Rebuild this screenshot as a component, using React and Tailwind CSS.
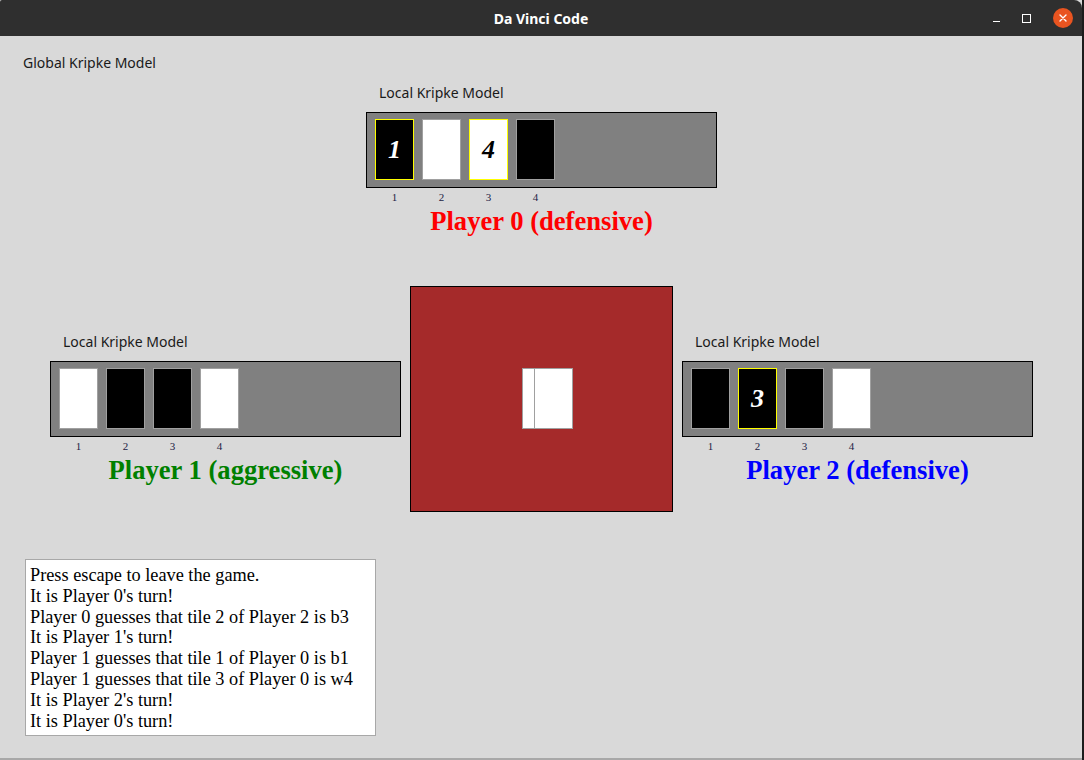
import React from "react";

const SANS = "font-['Noto_Sans',sans-serif]";
const SERIF = "font-['Liberation_Serif',serif]";

function Tile({ color, label, selected }) {
    const bg = color === "b" ? "bg-black text-white" : "bg-white text-black";
    const border = selected ? "border-[#ffff00]" : "border-[#a0a0a0]";
    return (
        <div className={`w-[39px] h-[61px] border ${border} ${bg} flex items-center justify-center ${SERIF} italic font-bold text-[26px] leading-none`}>
            {label}
        </div>
    );
}

function PlayerBoard({ tiles, name, nameColor }) {
    return (
        <div className="w-[351px] flex flex-col">
            <div className={`${SANS} text-[14px] leading-[18px] text-[#1a1a1a] pl-[13px]`}>Local Kripke Model</div>
            <div className="mt-[10px] h-[76px] border border-black bg-[#808080] flex gap-[8px] pl-[8px] pt-[6px]">
                {tiles.map((t, i) => (
                    <Tile key={i} {...t} />
                ))}
            </div>
            <div className="flex gap-[8px] pl-[9px] mt-[3px]">
                {tiles.map((_, i) => (
                    <div key={i} className={`w-[39px] text-center ${SERIF} text-[11px] leading-[12px] text-[#1c1c44]`}>{i + 1}</div>
                ))}
            </div>
            <div className={`${SERIF} font-bold text-[26.6px] leading-[30px] text-center mt-[3px] ${nameColor}`}>{name}</div>
        </div>
    );
}

const LOG = [
    "Press escape to leave the game.",
    "It is Player 0's turn!",
    "Player 0 guesses that tile 2 of Player 2 is b3",
    "It is Player 1's turn!",
    "Player 1 guesses that tile 1 of Player 0 is b1",
    "Player 1 guesses that tile 3 of Player 0 is w4",
    "It is Player 2's turn!",
    "It is Player 0's turn!",
];

export default function App() {
    return (
        <div className="w-[1084px] h-[760px] flex bg-[#1c1c1c] overflow-hidden">
            <div className="w-[1082px] h-full flex flex-col bg-[#d9d9d9] border-b-2 border-[#a8a8a8]">
                {/* title bar */}
                <div className="h-[36px] bg-[#2f2f2f] rounded-tr-[8px] rounded-tl-[2px] relative flex items-center justify-center">
                    <span className={`${SANS} font-bold text-[14px] text-white`}>Da Vinci Code</span>
                    <div className="absolute right-[9px] top-[8px] flex items-center gap-[22px]">
                        <div className="w-[7px] h-[1px] bg-white mt-[6px]" />
                        <div className="w-[9px] h-[9px] border border-white" />
                        <div className="w-[20px] h-[20px] rounded-full bg-[#e95420] flex items-center justify-center">
                            <svg width="10" height="10" viewBox="0 0 10 10">
                                <path d="M2 2 L8 8 M8 2 L2 8" stroke="white" strokeWidth="1.4" strokeLinecap="round" />
                            </svg>
                        </div>
                    </div>
                </div>

                {/* content */}
                <div className="flex-1 flex flex-col">
                    <div className={`${SANS} text-[14px] leading-[18px] text-[#1a1a1a] pl-[23px] mt-[18px]`}>Global Kripke Model</div>

                    <div className="ml-[366px] mt-[12px]">
                        <PlayerBoard
                            name="Player 0 (defensive)"
                            nameColor="text-[#ff0000]"
                            tiles={[
                                { color: "b", label: "1", selected: true },
                                { color: "w" },
                                { color: "w", label: "4", selected: true },
                                { color: "b" },
                            ]}
                        />
                    </div>

                    <div className="flex items-start mt-[50px]">
                        <div className="ml-[50px] mt-[47px]">
                            <PlayerBoard
                                name="Player 1 (aggressive)"
                                nameColor="text-[#008000]"
                                tiles={[
                                    { color: "w" },
                                    { color: "b" },
                                    { color: "b" },
                                    { color: "w" },
                                ]}
                            />
                        </div>
                        <div className="ml-[9px] w-[263px] h-[226px] bg-[#a52a2a] border border-black relative">
                            <div className="absolute left-[111px] top-[81px] w-[39px] h-[61px] bg-white border border-[#a0a0a0]" />
                            <div className="absolute left-[123px] top-[81px] w-[39px] h-[61px] bg-white border border-[#a0a0a0]" />
                        </div>
                        <div className="ml-[9px] mt-[47px]">
                            <PlayerBoard
                                name="Player 2 (defensive)"
                                nameColor="text-[#0000ff]"
                                tiles={[
                                    { color: "b" },
                                    { color: "b", label: "3", selected: true },
                                    { color: "b" },
                                    { color: "w" },
                                ]}
                            />
                        </div>
                    </div>

                    <div className={`ml-[25px] mt-[47px] w-[351px] h-[177px] bg-white border border-[#a8a8a8] px-[4px] pt-[5px] ${SERIF} text-[18.3px] leading-[20.8px] text-black`}>
                        {LOG.map((l, i) => (
                            <div key={i}>{l}</div>
                        ))}
                    </div>
                </div>
            </div>
            <div className="w-[2px] h-full" />
        </div>
    );
}
